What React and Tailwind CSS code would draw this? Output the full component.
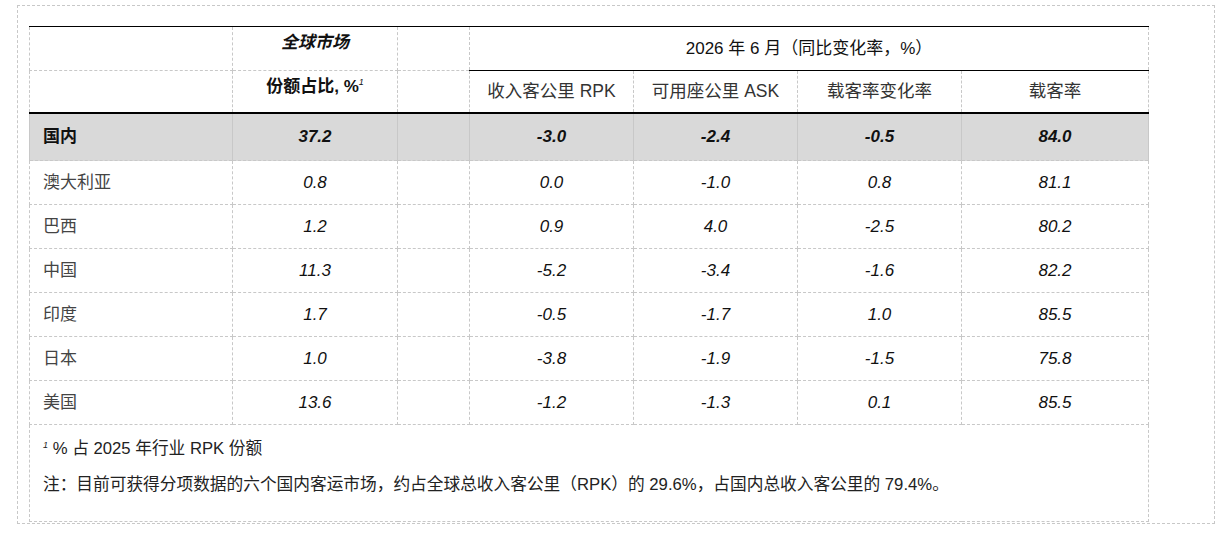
const rows = [
  { name: '澳大利亚', share: '0.8', rpk: '0.0', ask: '-1.0', plf: '0.8', lf: '81.1' },
  { name: '巴西', share: '1.2', rpk: '0.9', ask: '4.0', plf: '-2.5', lf: '80.2' },
  { name: '中国', share: '11.3', rpk: '-5.2', ask: '-3.4', plf: '-1.6', lf: '82.2' },
  { name: '印度', share: '1.7', rpk: '-0.5', ask: '-1.7', plf: '1.0', lf: '85.5' },
  { name: '日本', share: '1.0', rpk: '-3.8', ask: '-1.9', plf: '-1.5', lf: '75.8' },
  { name: '美国', share: '13.6', rpk: '-1.2', ask: '-1.3', plf: '0.1', lf: '85.5' },
]

const font = "font-['Liberation_Sans','Noto_Sans_CJK_SC',sans-serif]"
const cell = 'border border-dashed border-[#c8c8c8]'
// first header row: solid black rule on top
const topRule = ' border-t-black [border-top-style:solid]'
// second header row: 2px solid black rule below
const bottomRule = ' border-b-2 border-b-black [border-bottom-style:solid]'
const shaded = 'border-x border-b border-[#c8c8c8] [border-bottom-style:dashed]'

export default function App() {
  return (
    <div className={font + ' bg-white w-[1228px] h-[534px] pt-[5px] pl-[17px]'}>
      <div className="w-[1198px] h-[519px] border border-dashed border-[#c8c8c8] pl-[11px] pt-[20px]">
        <table className="border-collapse table-fixed w-[1119px] text-[17px] text-[#222]">
          <colgroup>
            <col className="w-[203px]" />
            <col className="w-[165px]" />
            <col className="w-[72px]" />
            <col className="w-[164px]" />
            <col className="w-[164px]" />
            <col className="w-[164px]" />
            <col className="w-[187px]" />
          </colgroup>
          <tbody>
            <tr className="h-[44px]">
              <td className={cell + topRule} />
              <td className={cell + topRule + ' align-top text-center pt-[3px] font-bold italic text-[#111]'}>全球市场</td>
              <td className={cell + topRule} />
              <td colSpan={4} className={cell + topRule + ' border-b-black [border-bottom-style:solid] text-center text-[#111]'}>
                2026 年 6 月（同比变化率，%）
              </td>
            </tr>
            <tr className="h-[42px]">
              <td className={cell + bottomRule} />
              <td className={cell + bottomRule + ' align-top text-center pt-[3px] font-bold text-[#111]'}>
                份额占比, %<sup className="italic font-normal text-[9px] -top-[7px]">1</sup>
              </td>
              <td className={cell + bottomRule} />
              <td className={cell + bottomRule + ' text-center text-[17.5px] text-[#333]'}>收入客公里 RPK</td>
              <td className={cell + bottomRule + ' text-center text-[17.5px] text-[#333]'}>可用座公里 ASK</td>
              <td className={cell + bottomRule + ' text-center text-[17.5px] text-[#333]'}>载客率变化率</td>
              <td className={cell + bottomRule + ' text-center text-[17.5px] text-[#333]'}>载客率</td>
            </tr>
            <tr className="h-[48px] bg-[#d9d9d9] font-bold text-[#111]">
              <td className={shaded + ' pl-[13px]'}>国内</td>
              <td className={shaded + ' text-center italic'}>37.2</td>
              <td className={shaded} />
              <td className={shaded + ' text-center italic'}>-3.0</td>
              <td className={shaded + ' text-center italic'}>-2.4</td>
              <td className={shaded + ' text-center italic'}>-0.5</td>
              <td className={shaded + ' text-center italic'}>84.0</td>
            </tr>
            {rows.map((r) => (
              <tr key={r.name} className="h-[44px]">
                <td className={cell + ' pl-[13px] text-[#444]'}>{r.name}</td>
                <td className={cell + ' text-center italic text-[#111]'}>{r.share}</td>
                <td className={cell} />
                <td className={cell + ' text-center italic text-[#111]'}>{r.rpk}</td>
                <td className={cell + ' text-center italic text-[#111]'}>{r.ask}</td>
                <td className={cell + ' text-center italic text-[#111]'}>{r.plf}</td>
                <td className={cell + ' text-center italic text-[#111]'}>{r.lf}</td>
              </tr>
            ))}
            <tr className="h-[97px]">
              <td colSpan={7} className={cell + ' align-top pl-[13px] pt-[11px] text-[16.7px] text-[#222]'}>
                <div className="flex flex-col gap-[11px]">
                  <p><sup className="italic text-[9px] -top-[6px]">1</sup> % 占 2025 年行业 RPK 份额</p>
                  <p>注：目前可获得分项数据的六个国内客运市场，约占全球总收入客公里（RPK）的 29.6%，占国内总收入客公里的 79.4%。</p>
                </div>
              </td>
            </tr>
          </tbody>
        </table>
      </div>
    </div>
  )
}
